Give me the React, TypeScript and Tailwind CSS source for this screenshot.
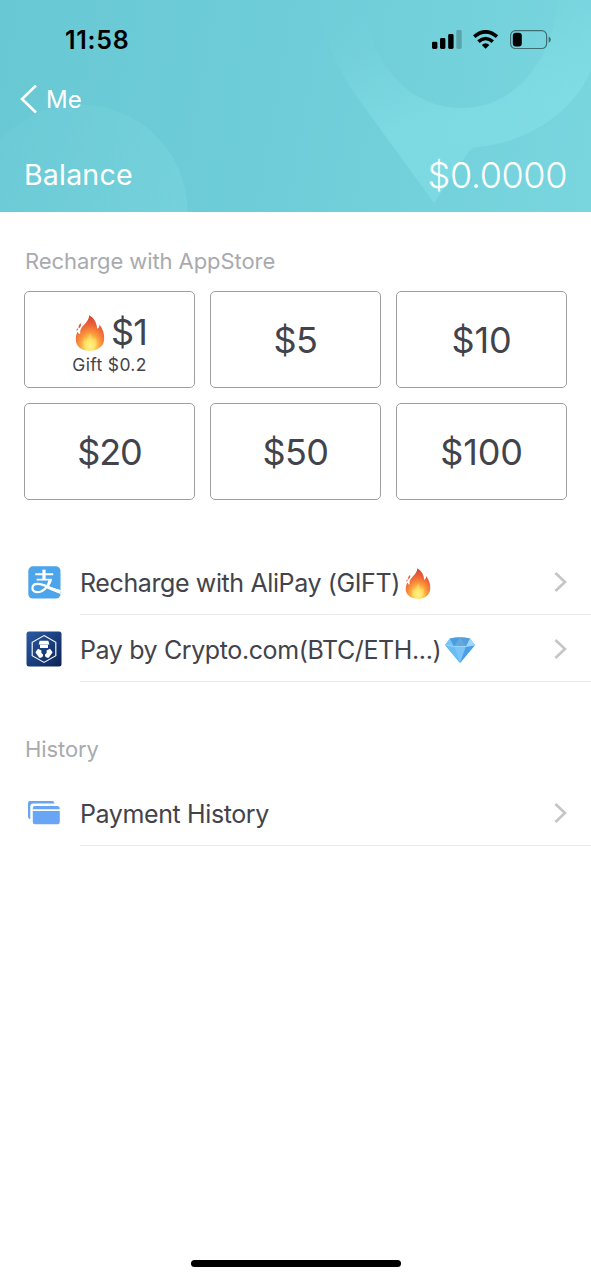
import React from 'react';

function Flame({ className, id }: { className: string; id: string }) {
  return (
    <svg viewBox="0 0 30 36" className={className} aria-hidden="true">
      <defs>
        <radialGradient id={id} cx="0.5" cy="0.86" r="0.78">
          <stop offset="0" stopColor="#fff7a0" />
          <stop offset="0.2" stopColor="#ffe262" />
          <stop offset="0.46" stopColor="#fb9a3c" />
          <stop offset="0.74" stopColor="#ef6637" />
          <stop offset="1" stopColor="#d94a30" />
        </radialGradient>
      </defs>
      <path
        d="M14.2 0.3C19.3 3.4 21.9 8 22.2 13.8C23.6 13.1 24.6 11.3 24.5 9.4C27.8 14 29.5 18.9 29.2 24C28.8 31.3 22.9 35.7 14.8 35.7C6.4 35.7 0.8 31 0.8 24.4C0.7 21.2 1.7 18.6 2.6 16.7C3.3 18.2 4.2 19 5.3 19.1C4.6 14.8 6.8 12.1 9.8 9C12.4 6.3 14.1 3.7 14.2 0.3Z"
        fill={`url(#${id})`}
      />
      <path d="M5.8 8.2C6.4 10.5 5.6 12.2 3.8 13.4C3.1 11.3 3.9 9.4 5.8 8.2ZM2.6 13.2C3.2 14.4 2.8 15.4 1.8 16C1.3 14.9 1.6 13.9 2.6 13.2Z" fill="#df593a" />
      <path d="M15 17.5C16.8 20.5 16.2 22.9 17.9 25.2C19.2 24.8 19.8 23.7 20.2 22.5C23 27.8 21.2 34.4 14.8 34.6C8.2 34.4 6.7 28.7 9.6 24.3C10.1 25.6 10.7 26.4 11.8 26.7C11.6 23.4 14.8 21.3 15 17.5Z" fill="#ffe96e" opacity="0.4" />
    </svg>
  );
}

function Gem() {
  return (
    <svg viewBox="0 0 30 26" className="mt-[4px] ml-[4px] h-[26px] w-[30px] shrink-0" aria-hidden="true">
      <path d="M5 1.5Q15-.8 25 1.5L30 8L15 26L0 8Z" fill="#57aef0" />
      <path d="M0 8L5 1.5L9 9.5Z" fill="#79c4f5" />
      <path d="M5 1.5Q10 .3 15 .4L9 9.5Z" fill="#4a9de0" />
      <path d="M15 .4L21 9.5H9Z" fill="#62a9e2" />
      <path d="M15 .4Q20 .3 25 1.5L21 9.5Z" fill="#549fdc" />
      <path d="M25 1.5L30 8L21 9.5Z" fill="#a0d8fa" />
      <path d="M0 8L9 9.5L15 26Z" fill="#67bdf5" />
      <path d="M9 9.5H21L15 26Z" fill="#7cc4f8" />
      <path d="M21 9.5L30 8L15 26Z" fill="#4a9fe8" />
      <path d="M0 8L9 9.5H21L30 8" fill="none" stroke="#a9dcfa" strokeWidth="0.8" />
    </svg>
  );
}

function AlipayLogo() {
  return (
    <svg viewBox="0 0 33 33" className="mt-px ml-px size-[33px]" aria-hidden="true">
      <rect x="0.3" y="0.3" width="32.2" height="32.2" rx="4.6" fill="#4ca4ea" />
      <g fill="none" stroke="#fff">
        <path d="M7.3 8.3H25.2M8.6 13.6H23.6" strokeWidth="1.9" />
        <path d="M16 3.6V13.6" strokeWidth="3.2" />
        <path d="M22.4 13.2C20.8 19.6 15.6 26.4 8.8 26.2C2.8 26 2.8 18 9.6 17.9C16 17.8 21 22.2 32.4 25.4" strokeWidth="2.2" />
      </g>
      <path d="M20.6 13.4H24.1C23 17.4 21.4 19.8 19.8 21.6L17.6 20.4C19.1 18.3 20.1 16 20.6 13.4ZM18 20.1L32.5 24V28C27 26 22.5 24 18 21.9Z" fill="#fff" />
    </svg>
  );
}

function CryptoLogo() {
  return (
    <svg viewBox="0 0 36 36" className="size-9" aria-hidden="true">
      <defs>
        <linearGradient id="navy" x1="0" y1="0" x2="1" y2="1">
          <stop offset="0" stopColor="#2a5aa4" />
          <stop offset="1" stopColor="#0b2357" />
        </linearGradient>
      </defs>
      <rect x="0.5" y="0.5" width="35" height="35" rx="2.5" fill="url(#navy)" />
      <path d="M18 4.6L29.8 11.3V24.7L18 31.4L6.2 24.7V11.3Z" fill="none" stroke="#f3f6fc" strokeWidth="1.2" />
      <path d="M13.7 9.8H22.3L23.4 13.6H12.6Z" fill="#fff" />
      <path d="M14 13.6H22V17H14Z" fill="#fff" />
      <path d="M9.4 21.2L12 17.8L15.4 19.6V22L17 23.6V25.2L15 26.8H13.2ZM26.6 21.2L24 17.8L20.6 19.6V22L19 23.6V25.2L21 26.8H22.8Z" fill="#fff" />
    </svg>
  );
}

function CardsIcon() {
  return (
    <svg viewBox="0 0 34 26" className="h-[26px] w-[34px]" fill="#69a5f5" aria-hidden="true">
      <path d="M3 1H25.5Q27.5 1 27.5 3.6H6.2Q3.3 3.6 3.3 6.5V19Q1 19 1 16.5V3Q1 1 3 1Z" />
      <path d="M8 6H30.5Q32.8 6 32.8 8.5V9.3H5.8V8.2Q5.8 6 8 6ZM5.8 11H32.8V22Q32.8 24.2 30.5 24.2H8Q5.8 24.2 5.8 22Z" />
    </svg>
  );
}

function Chevron() {
  return (
    <svg viewBox="0 0 14 22" className="mt-[2px] mr-[23px] ml-auto h-[22px] w-[14px] shrink-0" fill="none" stroke="#c5c5c7" strokeWidth="2.6" aria-hidden="true">
      <path d="M1.4 2L11 11L1.4 20" />
    </svg>
  );
}

function HeaderArt() {
  return (
    <svg viewBox="0 0 591 212" className="absolute inset-0 h-full w-full" aria-hidden="true">
      <defs>
        <linearGradient id="disc" x1="0" y1="0.2" x2="1" y2="0.5">
          <stop offset="0" stopColor="#8ce2e7" stopOpacity="0.06" />
          <stop offset="1" stopColor="#8ce2e7" stopOpacity="0.26" />
        </linearGradient>
        <linearGradient id="bubble" gradientUnits="userSpaceOnUse" x1="400" y1="0" x2="440" y2="190">
          <stop offset="0" stopColor="#8ce6ec" stopOpacity="0" />
          <stop offset="0.2" stopColor="#8ce6ec" stopOpacity="0.06" />
          <stop offset="0.65" stopColor="#8ce6ec" stopOpacity="0.42" />
          <stop offset="1" stopColor="#8ce6ec" stopOpacity="0.38" />
        </linearGradient>
      </defs>
      <circle cx="80" cy="212" r="107.5" fill="url(#disc)" />
      <path
        d="M318 0C323 28 331 55 345 78Q352 91 360 101L434 203L467 154Q471 147 478 147C530 142 575 110 591 70V0H558C552 65 512 108 462 108C412 108 373 70 362 0Z"
        fill="url(#bubble)"
      />
    </svg>
  );
}

function StatusIcons() {
  return (
    <svg viewBox="0 0 120 20" className="mr-[39px] ml-auto h-5 w-[120px]" aria-hidden="true">
      <rect x="0" y="11.7" width="5.4" height="7.2" rx="1.4" />
      <rect x="8" y="8.1" width="5.4" height="10.8" rx="1.4" />
      <rect x="16.2" y="4" width="5.4" height="14.9" rx="1.4" />
      <rect x="24.3" y="0" width="5.4" height="18.9" rx="1.4" opacity="0.22" />
      <g fill="none" stroke="#000" strokeWidth="3.6">
        <path d="M42.2 6.6Q53.6-3 65 6.6" />
        <path d="M46.4 11.6Q53.6 5.4 60.8 11.6" />
      </g>
      <path d="M49.8 14.9Q53.6 11.7 57.4 14.9L53.6 18.7Z" />
      <rect x="78.6" y="0.7" width="36" height="17.8" rx="4.8" fill="none" stroke="#000" strokeOpacity="0.48" strokeWidth="1.2" />
      <rect x="80.8" y="2.7" width="9" height="13.8" rx="3" />
      <path d="M116.7 6.5Q118.8 7.4 118.8 9.6T116.7 12.8Z" opacity="0.5" />
    </svg>
  );
}

const cell = 'flex h-[97px] flex-col items-center justify-center rounded-[5px] border-[1.5px] border-[#9d9ea1] text-[36px] leading-none';
const row = 'flex h-[67px] items-center pl-[25px]';
const rowBody = 'ml-[18px] flex h-full flex-1 items-center border-b-[1.5px] border-[#ebebed] text-[25px] tracking-[-0.39px]';

export default function App() {
  return (
    <div className="flex h-[1280px] w-[591px] flex-col bg-white font-['Inter',sans-serif] text-[#42434b]">
      <header className="relative h-[212px] bg-linear-[100deg] from-[#68c8d4] via-[#6ecdd8] to-[#79d6df]">
        <HeaderArt />
        <div className="relative flex h-20 items-center pl-[65px] text-black">
          <span className="pt-[2px] text-[25px] font-semibold tracking-[0.7px]">11:58</span>
          <StatusIcons />
        </div>
        <div className="relative flex h-[39px] items-center gap-[8px] pl-[20px] text-white">
          <svg viewBox="0 0 18 30" className="h-[30px] w-[18px]" fill="none" stroke="currentColor" strokeWidth="2.6" aria-hidden="true">
            <path d="M16 0.5L2 14L16 27.5" />
          </svg>
          <span className="text-[24px]">Me</span>
        </div>
        <div className="relative flex h-28 items-center justify-between pr-[24px] pl-[24px] text-white">
          <span className="text-[28.5px] tracking-[0.2px]">Balance</span>
          <span className="text-[36px] font-[350] tracking-[-0.4px]">$0.0000</span>
        </div>
      </header>

      <main className="flex-1">
        <h2 className="flex h-[79px] items-center pt-[19px] pl-[25px] text-[22px] tracking-[-0.08px] text-[#a9aaad]">Recharge with AppStore</h2>
        <div className="grid grid-cols-3 gap-x-[15px] gap-y-[15px] px-[24px]">
          <button className={cell}>
            <span className="mt-[10px] flex h-[40px] items-center gap-[6px] pl-[3px] tracking-[-0.8px]">
              <Flame id="flame-gift" className="mt-[2px] h-[36px] w-[30px]" />
              $1
            </span>
            <span className="h-[26px] text-[17.5px] leading-[25px] tracking-[0.35px]">Gift $0.2</span>
          </button>
          <button className={`${cell} tracking-[-0.4px]`}>$5</button>
          <button className={`${cell} tracking-[-0.2px]`}>$10</button>
          <button className={`${cell} tracking-[-1.1px]`}>$20</button>
          <button className={`${cell} tracking-[-0.6px]`}>$50</button>
          <button className={`${cell} tracking-[-0.2px]`}>$100</button>
        </div>

        <div className="mt-[48px]">
          <div className={row}>
            <span className="flex w-[37px] justify-center">
              <AlipayLogo />
            </span>
            <div className={rowBody}>
              <span className="pt-[5px]">Recharge with AliPay (GIFT)</span>
              <Flame id="flame-row" className="mt-[4px] ml-[5px] h-[31px] w-[26px]" />
              <Chevron />
            </div>
          </div>
          <div className={row}>
            <span className="flex w-[37px] justify-center"><CryptoLogo /></span>
            <div className={rowBody}>
              <span className="pt-[5px]">Pay by Crypto.com(BTC/ETH...)</span>
              <Gem />
              <Chevron />
            </div>
          </div>
        </div>

        <h2 className="flex h-[97px] items-center pt-[38px] pl-[25px] text-[22px] tracking-[-0.08px] text-[#a9aaad]">History</h2>
        <div className={row}>
          <span className="flex w-[37px] justify-center"><CardsIcon /></span>
          <div className={rowBody}>
            <span className="pt-[5px]">Payment History</span>
            <Chevron />
          </div>
        </div>
      </main>
      <footer className="flex h-[20px] justify-center">
        <div className="h-[7px] w-[210px] rounded-full bg-black" />
      </footer>
    </div>
  );
}
